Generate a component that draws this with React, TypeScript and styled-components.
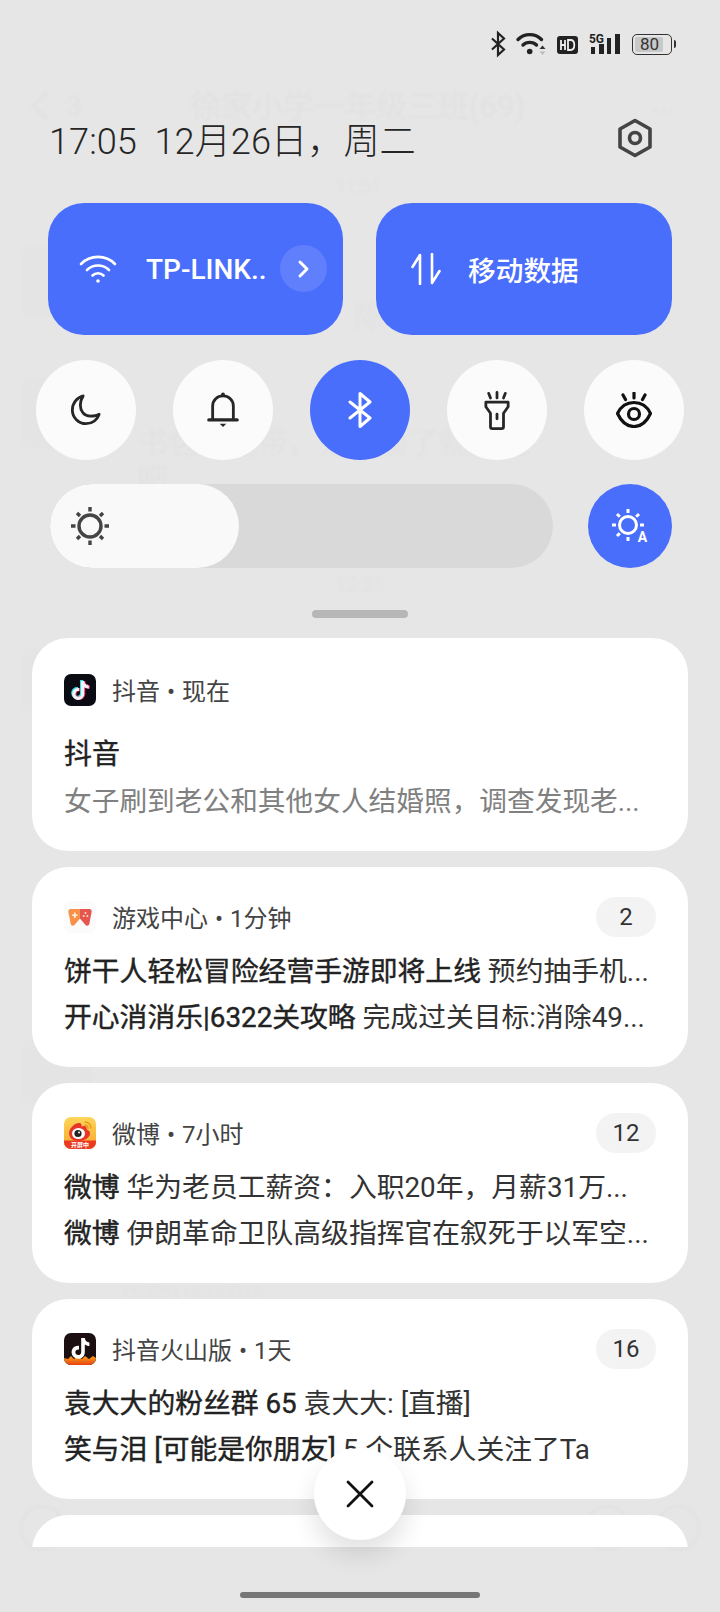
import React from "react";
import styled, { createGlobalStyle } from "styled-components";
import { FaTiktok } from "react-icons/fa";

const Global = createGlobalStyle`
  html, body { margin: 0; padding: 0; background: #e6e6e6; }
  * { box-sizing: border-box; }
`;

const FONT = `Roboto, "Noto Sans CJK SC", sans-serif`;
const BLUE = "#4a6efc";

const Screen = styled.div`
  position: relative;
  width: 720px;
  height: 1612px;
  overflow: hidden;
  background: #e6e6e6;
  font-family: ${FONT};
  color: #222;
`;

/* the blurred chat that shows through the shade */
const Ghost = styled.div`
  position: absolute;
  inset: 0;
  filter: blur(1px);
`;
const GhostText = styled.div<{ $x: number; $y: number; $size: number; $faint?: boolean }>`
  position: absolute;
  left: ${(p) => p.$x}px;
  top: ${(p) => p.$y}px;
  font-size: ${(p) => p.$size}px;
  line-height: 1;
  white-space: nowrap;
  color: ${(p) => (p.$faint ? "#e2e2e2" : "#e1e1e1")};
`;
const GhostBlock = styled.div<{ $x: number; $y: number; $w: number; $h: number }>`
  position: absolute;
  left: ${(p) => p.$x}px;
  top: ${(p) => p.$y}px;
  width: ${(p) => p.$w}px;
  height: ${(p) => p.$h}px;
  background: #e4e4e4;
  border-radius: 8px;
`;
const GhostRing = styled.div<{ $x: number }>`
  position: absolute;
  left: ${(p) => p.$x}px;
  top: 1505px;
  width: 44px;
  height: 46px;
  border: 2px solid #e1e1e1;
  border-radius: 50%;
`;
const GhostBack = styled.svg`
  position: absolute;
  left: 30px;
  top: 91px;
`;

const Panel = styled.div`
  position: relative;
  display: flex;
  flex-direction: column;
  height: 100%;
`;

const StatusBar = styled.div`
  height: 70px;
  padding: 32px 48px 0 0;
  display: flex;
  justify-content: flex-end;
  align-items: flex-start;
  gap: 11px;
  color: #222;
`;
const StatusIcon = styled.svg<{ $top?: number }>`
  display: block;
  flex: none;
  overflow: visible;
  margin-top: ${(p) => p.$top ?? 0}px;
`;
const BatteryWrap = styled.div`
  position: relative;
  width: 40px;
  height: 21px;
  margin-top: 2px;
  border: 1.5px solid #333;
  border-radius: 5px;
  padding: 2px;
  &::after {
    content: "";
    position: absolute;
    right: -5px;
    top: 5px;
    width: 2px;
    height: 8px;
    background: #333;
    border-radius: 0 2px 2px 0;
  }
`;
const BatteryFill = styled.div`
  width: 82%;
  height: 100%;
  background: #c8c8c8;
  border-radius: 2px;
`;
const BatteryLabel = styled.span`
  position: absolute;
  left: 7px;
  top: 0;
  line-height: 18px;
  font-size: 17px;
  color: #333;
`;

const Header = styled.div`
  height: 133px;
  padding: 53px 48px 0 49px;
  display: flex;
  justify-content: space-between;
  align-items: flex-start;
`;
const Clock = styled.div`
  font-size: 36.2px;
  line-height: 38px;
  color: #262626;
  white-space: pre;
  font-weight: 300;
`;
const Gear = styled.svg`
  margin: -5px 19px 0 0;
  display: block;
`;

const TileRow = styled.div`
  display: grid;
  grid-template-columns: 295px 296px;
  gap: 33px;
  padding: 0 48px;
`;
const Tile = styled.div`
  height: 132px;
  border-radius: 36px;
  background: ${BLUE};
  color: #fff;
  display: flex;
  align-items: center;
  position: relative;
`;
const TileIcon = styled.svg<{ $left: number }>`
  margin-left: ${(p) => p.$left}px;
  display: block;
  flex: none;
`;
const TileLabel = styled.span<{ $left: number; $size: number }>`
  margin-left: ${(p) => p.$left}px;
  font-size: ${(p) => p.$size}px;
  font-weight: 500;
  white-space: nowrap;
`;
const Chevron = styled.div`
  position: absolute;
  left: 232px;
  top: 42px;
  width: 47px;
  height: 47px;
  border-radius: 50%;
  background: rgba(255, 255, 255, 0.12);
  display: flex;
  align-items: center;
  justify-content: center;
`;

const RoundRow = styled.div`
  display: flex;
  justify-content: space-between;
  margin-top: 25px;
  padding: 0 36px;
`;
const RoundButton = styled.div<{ $on?: boolean }>`
  width: 100px;
  height: 100px;
  border-radius: 50%;
  background: ${(p) => (p.$on ? BLUE : "#fbfbfb")};
  color: ${(p) => (p.$on ? "#fff" : "#262626")};
  display: flex;
  align-items: center;
  justify-content: center;
`;

const SliderRow = styled.div`
  display: flex;
  justify-content: space-between;
  margin-top: 24px;
  padding: 0 48px 0 50px;
`;
const SliderTrack = styled.div`
  position: relative;
  width: 503px;
  height: 84px;
  border-radius: 42px;
  background: #d9d9d9;
  overflow: hidden;
`;
const SliderFill = styled.div`
  width: 189px;
  height: 100%;
  border-radius: 42px;
  background: #f9f9f9;
  display: flex;
  align-items: center;
  padding-left: 20px;
  color: #444;
`;
const AutoButton = styled.div`
  width: 84px;
  height: 84px;
  border-radius: 50%;
  background: ${BLUE};
  color: #fff;
  display: flex;
  align-items: center;
  justify-content: center;
`;
const AutoIcon = styled.svg`
  overflow: visible;
  display: block;
`;

const Handle = styled.div`
  align-self: center;
  width: 96px;
  height: 8px;
  border-radius: 4px;
  background: #b7b7b7;
  margin: 42px 0 20px;
`;

const CardList = styled.div`
  display: flex;
  flex-direction: column;
  gap: 16px;
  padding: 0 32px;
  height: 909px;
  overflow: hidden;
`;
const Card = styled.div<{ $h: number }>`
  flex: none;
  height: ${(p) => p.$h}px;
  background: #fff;
  border-radius: 36px;
  padding: 30px 32px 0;
`;
const MetaRow = styled.div<{ $top?: number }>`
  display: flex;
  align-items: center;
  height: 40px;
  margin-top: ${(p) => p.$top ?? 0}px;
`;
const AppIcon = styled.div`
  width: 32px;
  height: 32px;
  flex: none;
  border-radius: 7px;
  overflow: hidden;
`;
const MetaText = styled.span`
  margin: -2px 0 0 16px;
  font-size: 24px;
  word-spacing: 1px;
  color: #444;
  white-space: pre;
`;
const Badge = styled.div`
  margin-left: auto;
  width: 60px;
  height: 40px;
  border-radius: 20px;
  background: #f3f3f3;
  font-size: 24px;
  color: #333;
  display: flex;
  align-items: center;
  justify-content: center;
`;
const Title = styled.div`
  margin-top: 24px;
  font-size: 28px;
  line-height: 42px;
  -webkit-text-stroke: 0.4px #222;
  color: #222;
`;
const Body = styled.div`
  margin-top: 5px;
  font-size: 27.7px;
  line-height: 42px;
  color: #808080;
  white-space: nowrap;
`;
const Lines = styled.div`
  margin-top: 12px;
  display: flex;
  flex-direction: column;
`;
const Line = styled.div`
  font-size: 27.8px;
  line-height: 46px;
  color: #333;
  white-space: nowrap;
`;
const Sender = styled.span`
  -webkit-text-stroke: 0.4px #222;
  color: #222;
`;

const CloseButton = styled.div`
  position: absolute;
  left: 314px;
  top: 1448px;
  width: 92px;
  height: 92px;
  border-radius: 50%;
  background: #fff;
  box-shadow: 0 14px 26px rgba(0, 0, 0, 0.12);
  display: flex;
  align-items: center;
  justify-content: center;
`;
const HomeBar = styled.div`
  position: absolute;
  left: 240px;
  top: 1592px;
  width: 240px;
  height: 6px;
  border-radius: 3px;
  background: #777;
`;

const NoteLayer = styled.span<{ $top: number; $left: number; $color: string }>`
  position: absolute;
  top: ${(p) => p.$top}px;
  left: ${(p) => p.$left}px;
  color: ${(p) => p.$color};
  display: block;
  line-height: 0;
`;
const TikTokMark: React.FC<{ size: number; top?: number; left?: number; color: string }> = ({ size, color, top = 0, left = 0 }) => (
  <NoteLayer $top={top} $left={left} $color={color}>
    <FaTiktok size={size} />
  </NoteLayer>
);
const DouyinTile = styled.div<{ $bg: string }>`
  position: relative;
  width: 32px;
  height: 32px;
  background: ${(p) => p.$bg};
`;

const Douyin = () => (
  <DouyinTile $bg="#0b0b14">
    <TikTokMark size={19} top={6} left={6.2} color="#29e6e6" />
    <TikTokMark size={19} top={7} left={7.8} color="#f5255f" />
    <TikTokMark size={19} top={6.5} left={7} color="#f4f4f4" />
  </DouyinTile>
);

const Huoshan = () => (
  <svg width="32" height="32" viewBox="0 0 32 32">
    <defs>
      <linearGradient id="hs" x1="0" y1="0" x2="0" y2="1">
        <stop offset="0" stopColor="#f9a11b" />
        <stop offset="1" stopColor="#e8420f" />
      </linearGradient>
    </defs>
    <rect width="32" height="32" fill="#1c0f12" />
    <path d="M0 32V25l4 1 3-3 3 3 4-3 4 3 3-3 4 3 4-3 3 2v7z" fill="url(#hs)" />
    <path d="M17.200 5h3.600c.3 2.600 2 4.300 4.600 4.600v3.500c-1.800 0-3.300-.6-4.600-1.500v7.300c0 4-3 6.800-6.600 6.800-3.800 0-6.600-3-6.600-6.500 0-4 3.500-7 7.400-6.400v3.800c-2-.5-3.700 1-3.700 2.700 0 1.600 1.300 2.800 2.900 2.800 1.700 0 3-1.200 3-3.200z" fill="#fff" />
  </svg>
);

const GameCenter = () => (
  <svg width="32" height="32" viewBox="0 0 32 32">
    <rect width="32" height="32" fill="#fbfbfb" />
    <path d="M6.500 8H16v9.500L10.500 24c-1.300 1.300-3.300.7-3.800-1L4.400 11c-.3-1.600.6-3 2.100-3z" fill="#f89147" />
    <path d="M16 8h9.500c1.500 0 2.400 1.400 2.100 3l-2.300 12c-.5 1.700-2.500 2.300-3.800 1L16 17.500z" fill="#e5574e" />
    <path d="M10 11.500h1.600v1.900h1.900V15h-1.900v1.900H10V15H8.100v-1.600H10z" fill="#fff2e6" />
    <circle cx="21.500" cy="12" r="1" fill="#ffd8d0" />
    <circle cx="19.700" cy="15" r="1" fill="#ffd8d0" />
    <circle cx="23.300" cy="15" r="1" fill="#ffd8d0" />
  </svg>
);

const Weibo = () => (
  <svg width="32" height="32" viewBox="0 0 32 32">
    <defs>
      <linearGradient id="wb" x1="0" y1="0" x2="0" y2="1">
        <stop offset="0" stopColor="#fdd65a" />
        <stop offset="1" stopColor="#f9a428" />
      </linearGradient>
    </defs>
    <rect width="32" height="32" fill="url(#wb)" />
    <rect y="23.500" width="32" height="8.500" fill="#ea3a22" />
    <path d="M5 16c0-5 6-10 10-10 2.500 0 3 2 2.500 3.500 2.500-1 5-.6 5 1.500 0 1 0 1.600 1 2 2 .7 2.500 2 2.500 3.200C26 21 20 24 14 24 9 24 5 21 5 16z" fill="#e8352a" />
    <ellipse cx="14.500" cy="16.500" rx="6.500" ry="5.500" fill="#fff" />
    <circle cx="14" cy="16.500" r="3.600" fill="#222" />
    <circle cx="15" cy="15.500" r="1" fill="#fff" />
    <path d="M21 5a6 6 0 0 1 6 6M21 8.200a3 3 0 0 1 3 3" stroke="#e89a1c" strokeWidth="1.500" fill="none" strokeLinecap="round" />
    <text x="16" y="30" fontSize="6" fontWeight="700" fill="#fff" textAnchor="middle" fontFamily="Noto Sans CJK SC, sans-serif">开屏中</text>
  </svg>
);

const Sun = ({ size, stroke }: { size: number; stroke: number }) => (
  <svg width={size} height={size} viewBox="0 0 40 40" fill="none" stroke="currentColor" strokeWidth={stroke}>
    <circle cx="20" cy="20" r="11" />
    <path d="M20 1v4.500M20 34.500V39M1 20h4.500M34.500 20H39M7 7l3 3M30 30l3 3M33 7l-3 3M10 30l-3 3" />
  </svg>
);

export default function App() {
  return (
    <Screen>
      <Global />
      <Ghost>
        <GhostBack width="20" height="30" viewBox="0 0 20 30" fill="none" stroke="#e1e1e1" strokeWidth="3">
          <path d="M17 2L3 15l14 13" />
        </GhostBack>
        <GhostText $x={66} $y={93} $size={28}>3</GhostText>
        <GhostText $x={190} $y={91} $size={31}>徐家小学一年级三班(69)</GhostText>
        <GhostText $x={652} $y={88} $size={30}>...</GhostText>
        <GhostText $x={336} $y={178} $size={18} $faint>11:51</GhostText>
        <GhostText $x={354} $y={302} $size={30} $faint>陈</GhostText>
        <GhostText $x={138} $y={428} $size={30} $faint>书包让他带，太麻烦了就让他</GhostText>
        <GhostText $x={138} $y={464} $size={30} $faint>吧</GhostText>
        <GhostText $x={335} $y={575} $size={20} $faint>12:25</GhostText>
        <GhostText $x={120} $y={1284} $size={18} $faint>15005119990022</GhostText>
        <GhostBlock $x={22} $y={245} $w={40} $h={72} />
        <GhostBlock $x={22} $y={378} $w={40} $h={70} />
        <GhostBlock $x={22} $y={648} $w={40} $h={64} />
        <GhostBlock $x={22} $y={1040} $w={70} $h={64} />
        <GhostRing $x={20} />
        <GhostRing $x={585} />
        <GhostRing $x={656} />
      </Ghost>

      <Panel>
        <StatusBar>
          <StatusIcon width="14" height="24" viewBox="0 0 14 24" fill="none" stroke="currentColor" strokeWidth="2.200">
            <path d="M1 6.500l12 11L7 23V1l6 5.500L1 17.500" />
          </StatusIcon>
          <StatusIcon width="30" height="24" viewBox="0 0 30 24">
            <g fill="none" stroke="currentColor" strokeWidth="3.400" strokeLinecap="round">
              <path d="M2 7.500c6.500-6.500 17-6.500 23.500 0" />
              <path d="M7 13c3.500-3.500 10-3.500 13.500 0" />
            </g>
            <circle cx="13.700" cy="19.500" r="2.800" fill="currentColor" />
            <path d="M26.500 13.500l3 3.500h-6z" fill="#333" />
            <path d="M26.500 23l3-3.500h-6z" fill="#bbb" />
          </StatusIcon>
          <StatusIcon $top={4} width="21" height="18" viewBox="0 0 21 18">
            <rect width="21" height="18" rx="3" fill="#222" />
            <path d="M4 4v10M8 4v10M4 9h4" stroke="#eee" strokeWidth="1.800" fill="none" />
            <path d="M11 4v10h2.500c2.500 0 3.800-2 3.800-5s-1.300-5-3.800-5z" stroke="#eee" strokeWidth="1.800" fill="none" />
          </StatusIcon>
          <StatusIcon width="32" height="23" viewBox="0 0 32 23">
            <text x="0" y="10.500" fontSize="13" fontWeight="700" fill="currentColor" fontFamily="Roboto, sans-serif" textLength="15" lengthAdjust="spacingAndGlyphs">5G</text>
            <rect x="2" y="15" width="4" height="7" fill="currentColor" />
            <rect x="10" y="12" width="5" height="10" fill="currentColor" />
            <rect x="18" y="6" width="4" height="16" fill="currentColor" />
            <rect x="26" y="2" width="5" height="20" fill="currentColor" />
          </StatusIcon>
          <BatteryWrap>
            <BatteryFill />
            <BatteryLabel>80</BatteryLabel>
          </BatteryWrap>
        </StatusBar>

        <Header>
          <Clock>{"17:05  12月26日，周二"}</Clock>
          <Gear width="36" height="40" viewBox="0 0 36 40" fill="none" stroke="#444" strokeWidth="3.600">
            <path d="M18 2.500l15 8.500v18l-15 8.500L3 29V11z" strokeLinejoin="round" />
            <circle cx="18" cy="20" r="5.500" />
          </Gear>
        </Header>

        <TileRow>
          <Tile>
            <TileIcon $left={31} width="38" height="30" viewBox="0 0 38 30" fill="none" stroke="#fff" strokeWidth="2.600" strokeLinecap="round">
              <path d="M2 10c9-9.500 25-9.500 34 0" />
              <path d="M8 16c6-6 16-6 22 0" />
              <path d="M13.500 21.500c3-3 8-3 11 0" />
              <circle cx="19" cy="27" r="1.800" fill="#fff" stroke="none" />
            </TileIcon>
            <TileLabel $left={29} $size={28}>TP-LINK..</TileLabel>
            <Chevron>
              <svg width="14" height="20" viewBox="0 0 14 20" fill="none" stroke="#fff" strokeWidth="3" strokeLinecap="round" strokeLinejoin="round">
                <path d="M3 3l7 7-7 7" />
              </svg>
            </Chevron>
          </Tile>
          <Tile>
            <TileIcon $left={35} width="30" height="32" viewBox="0 0 30 32" fill="none" stroke="#fff" strokeWidth="2.600" strokeLinecap="round" strokeLinejoin="round">
              <path d="M9 31V2L1.500 14" />
              <path d="M21 1v29l7.500-12" />
            </TileIcon>
            <TileLabel $left={27} $size={27.7}>移动数据</TileLabel>
          </Tile>
        </TileRow>

        <RoundRow>
          <RoundButton>
            <svg width="32" height="32" viewBox="0 0 34 34" fill="none" stroke="currentColor" strokeWidth="3" strokeLinejoin="round">
              <path d="M14 2C7 4 2.500 10 2.500 17c0 8 6.500 14.500 14.500 14.500 6.500 0 12-4 14-10-3 2-6.500 2-9.500 2C15 23.500 11 18 11 12c0-3.500 1-7 3-10z" />
            </svg>
          </RoundButton>
          <RoundButton>
            <svg width="32" height="36" viewBox="0 0 34 38" fill="none" stroke="currentColor" strokeWidth="3" strokeLinejoin="round">
              <path d="M6 29V15C6 8.500 11 4 17 4s11 4.500 11 11v14" />
              <path d="M2 29.500h30" strokeLinecap="round" strokeWidth="3.600" />
              <circle cx="17" cy="2.500" r="2" fill="currentColor" stroke="none" />
              <path d="M13.500 33.500h7l-3.500 3.500z" fill="currentColor" stroke="none" />
            </svg>
          </RoundButton>
          <RoundButton $on>
            <svg width="24" height="36" viewBox="0 0 24 36" fill="none" stroke="currentColor" strokeWidth="3" strokeLinejoin="round">
              <path d="M2 10l20 16-10 8.500V1.500L22 10 2 26" strokeLinecap="round" />
            </svg>
          </RoundButton>
          <RoundButton>
            <svg width="26" height="41" viewBox="0 0 28 42" fill="none" stroke="currentColor" strokeWidth="3" strokeLinejoin="round" strokeLinecap="round">
              <path d="M14 1.500v6M5 2.500l2 5M23 2.500l-2 5" />
              <path d="M2 12h24v5l-5 7v14.500a2 2 0 0 1-2 2H9a2 2 0 0 1-2-2V24l-5-7z" />
              <path d="M14 25v5" />
            </svg>
          </RoundButton>
          <RoundButton>
            <svg width="36" height="36" viewBox="0 0 36 36" fill="none" stroke="#111" strokeWidth="3.200" strokeLinecap="round" strokeLinejoin="round">
              <path d="M18 1v5M7 3l2.500 4.500M29 3l-2.500 4.500" />
              <path d="M1.500 21.500C5 14 11 10.500 18 10.500s13 3.500 16.500 11C31 29 25 34.500 18 34.500S5 29 1.500 21.500z" />
              <circle cx="18" cy="22" r="5.500" />
            </svg>
          </RoundButton>
        </RoundRow>

        <SliderRow>
          <SliderTrack>
            <SliderFill>
              <Sun size={40} stroke={3.400} />
            </SliderFill>
          </SliderTrack>
          <AutoButton>
            <AutoIcon width="36" height="36" viewBox="0 0 36 36" fill="none" stroke="#fff" strokeWidth="3">
              <circle cx="16" cy="17" r="8.500" />
              <path d="M16 1v4M16 29v4M0 17h4M28 17h4M5 6l2.800 2.800M27 6l-2.800 2.800M5 28l2.800-2.800" />
              <text x="30.500" y="34" fontSize="14" fontWeight="700" fill="#fff" stroke="none" textAnchor="middle" fontFamily="Roboto, sans-serif">A</text>
            </AutoIcon>
          </AutoButton>
        </SliderRow>

        <Handle />

        <CardList>
          <Card $h={213}>
            <MetaRow $top={2}>
              <AppIcon><Douyin /></AppIcon>
              <MetaText>抖音 • 现在</MetaText>
            </MetaRow>
            <Title>抖音</Title>
            <Body>女子刷到老公和其他女人结婚照，调查发现老...</Body>
          </Card>
          <Card $h={200}>
            <MetaRow>
              <AppIcon><GameCenter /></AppIcon>
              <MetaText>游戏中心 • 1分钟</MetaText>
              <Badge>2</Badge>
            </MetaRow>
            <Lines>
              <Line><Sender>饼干人轻松冒险经营手游即将上线</Sender> 预约抽手机...</Line>
              <Line><Sender>开心消消乐|6322关攻略</Sender> 完成过关目标:消除49...</Line>
            </Lines>
          </Card>
          <Card $h={200}>
            <MetaRow>
              <AppIcon><Weibo /></AppIcon>
              <MetaText>微博 • 7小时</MetaText>
              <Badge>12</Badge>
            </MetaRow>
            <Lines>
              <Line><Sender>微博</Sender> 华为老员工薪资：入职20年，月薪31万...</Line>
              <Line><Sender>微博</Sender> 伊朗革命卫队高级指挥官在叙死于以军空...</Line>
            </Lines>
          </Card>
          <Card $h={200}>
            <MetaRow>
              <AppIcon><Huoshan /></AppIcon>
              <MetaText>抖音火山版 • 1天</MetaText>
              <Badge>16</Badge>
            </MetaRow>
            <Lines>
              <Line><Sender>袁大大的粉丝群 65</Sender> 袁大大: [直播]</Line>
              <Line><Sender>笑与泪 [可能是你朋友]</Sender> 5 个联系人关注了Ta</Line>
            </Lines>
          </Card>
          <Card $h={200} />
        </CardList>
      </Panel>

      <CloseButton>
        <svg width="28" height="28" viewBox="0 0 28 28" fill="none" stroke="#111" strokeWidth="2.800" strokeLinecap="round">
          <path d="M2 2l24 24M26 2L2 26" />
        </svg>
      </CloseButton>
      <HomeBar />
    </Screen>
  );
}
